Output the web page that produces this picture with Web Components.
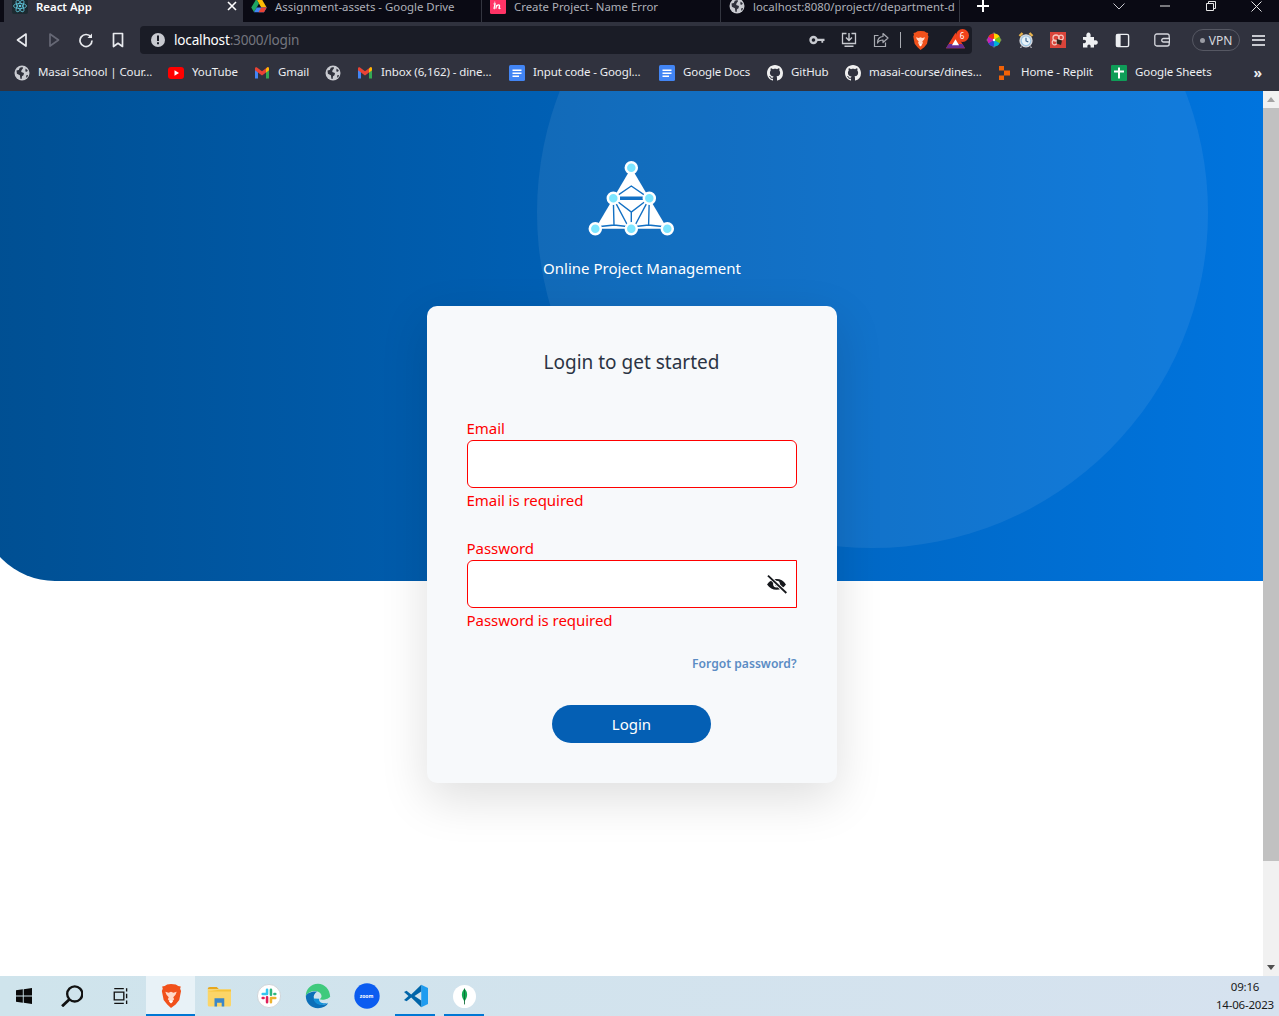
<!DOCTYPE html>
<html>
<head>
<meta charset="utf-8">
<title>React App</title>
<style>
  html, body { margin: 0; height: 100%; overflow: hidden; background: #fff; }
  body { font-family: "Noto Sans", "Open Sans", sans-serif; display: flex; flex-direction: column; width: 1279px; height: 1016px; }
</style>
</head>
<body>
  <tab-strip>
    <chrome-tab active icon="react" label="React App"></chrome-tab>
    <chrome-tab icon="drive" label="Assignment-assets - Google Drive"></chrome-tab>
    <chrome-tab icon="invision" label="Create Project- Name Error"></chrome-tab>
    <chrome-tab icon="globe" label="localhost:8080/project//department-d"></chrome-tab>
  </tab-strip>
  <tool-bar></tool-bar>
  <bookmark-bar>
    <book-mark icon="globe" label="Masai School | Cour..." width="114"></book-mark>
    <book-mark icon="youtube" label="YouTube" width="46"></book-mark>
    <book-mark icon="gmail" label="Gmail" width="31"></book-mark>
    <book-mark icon="globe"></book-mark>
    <book-mark icon="gmail" label="Inbox (6,162) - dine..." width="112"></book-mark>
    <book-mark icon="docs" label="Input code - Googl..." width="110"></book-mark>
    <book-mark icon="docs" label="Google Docs" width="68"></book-mark>
    <book-mark icon="github" label="GitHub" width="38"></book-mark>
    <book-mark icon="github" label="masai-course/dines..." width="112"></book-mark>
    <book-mark icon="replit" label="Home - Replit" width="74"></book-mark>
    <book-mark icon="sheets" label="Google Sheets" width="77"></book-mark>
  </bookmark-bar>
  <login-page>
    <login-card>
      <form-field label="Email" error="Email is required"></form-field>
      <form-field label="Password" error="Password is required" type="password" square></form-field>
    </login-card>
  </login-page>
  <task-bar></task-bar>

<script>
const GH = 'M8 0C3.58 0 0 3.58 0 8c0 3.54 2.29 6.53 5.47 7.59.4.07.55-.17.55-.38 0-.19-.01-.82-.01-1.49-2.01.37-2.53-.49-2.69-.94-.09-.23-.48-.94-.82-1.13-.28-.15-.68-.52-.01-.53.63-.01 1.08.58 1.23.82.72 1.21 1.87.87 2.33.66.07-.52.28-.87.51-1.07-1.78-.2-3.64-.89-3.64-3.95 0-.87.31-1.59.82-2.15-.08-.2-.36-1.02.08-2.12 0 0 .67-.21 2.2.82.64-.18 1.32-.27 2-.27.68 0 1.36.09 2 .27 1.53-1.04 2.2-.82 2.2-.82.44 1.1.16 1.92.08 2.12.51.56.82 1.27.82 2.15 0 3.07-1.87 3.75-3.65 3.95.29.25.54.73.54 1.48 0 1.07-.01 1.93-.01 2.2 0 .21.15.46.55.38A8.013 8.013 0 0016 8c0-4.42-3.58-8-8-8z';
const LION = '<path d="M8 0l3.2.3 1.6 1 1.7.3-.4 1.6.6 1.5-1.2 6-2.4 3L8 16l-2.5-2.3-2.4-3-1.2-6 .6-1.5-.4-1.6 1.7-.3 1.6-1z" fill="#f1511b"/><path d="M4.2 5.2l2.2.6L8 5.2l1.6.6 2.2-.6-.8 2-1.5 1.6.6 1.4L8 12.6l-2.1-2.4.6-1.4L5 7.2z" fill="#ffd9c8"/><path d="M6.6 11.6L8 10.8l1.4.8L8 13z" fill="#fff"/>';
const ICONS = {
  react: '<rect width="16" height="16" rx="2" fill="#1c2a30"/><g fill="none" stroke="#5fc7dc" stroke-width=".8"><ellipse cx="8" cy="8" rx="6.5" ry="2.6"/><ellipse cx="8" cy="8" rx="6.5" ry="2.6" transform="rotate(60 8 8)"/><ellipse cx="8" cy="8" rx="6.5" ry="2.6" transform="rotate(120 8 8)"/></g><circle cx="8" cy="8" r="1.3" fill="#5fc7dc"/>',
  drive: '<path d="M5.3 1h5.4l5 8.6H10.3z" fill="#fbbc04"/><path d="M5.3 1L.3 9.6l2.7 4.7 5-8.7z" fill="#1fa463"/><path d="M3 14.3h10l2.7-4.7H5.7z" fill="#4285f4"/><path d="M10.3 9.6h5.4l-2.7 4.7H7.6z" fill="#ea4335"/>',
  invision: '<rect width="16" height="16" rx="1.5" fill="#ff3366"/><path d="M3.6 5.8h1.5l-1 4.4c-.1.5.3.5.7.2M4.7 3.8v.6M6.7 7l-.9 3.7M6.7 8c1.5-1.6 3.2-1.5 2.8.3l-.5 1.7c-.1.7.5.8 1.4 0" fill="none" stroke="#fff" stroke-width="1.3"/>',
  globe: '<circle cx="8" cy="8" r="7.5" fill="#c9cbd1"/><path d="M2.5 5.5l2.3-.4 1-2.400L8.500 2l.5 1.300L7.500 5.300l-.3 1.800 2.800.9-.5 2.300-1.500 1-.4 2.600-1.200-.2-.5-3.500-3-1.500zM11.500 3.500l2.300 1.800-.8 1.500-1.700-.4zM12.500 10l1.700.2-1.200 2.300-1-.2z" fill="#2f313c"/>',
  youtube: '<rect y="2" width="16" height="12" rx="3" fill="#f00"/><path d="M6.5 5.3L11 8l-4.500 2.700z" fill="#fff"/>',
  gmail: '<path d="M1 13.500V4.500l3 2.200v6.800z" fill="#4285f4"/><path d="M12 13.500V6.700l3-2.200v9z" fill="#34a853"/><path d="M1 5.200V3.400c0-1 1.200-1.500 2-.9L8 6.200l5-3.700c.8-.6 2-.1 2 .9v1.800L12 7.400 8 10.400 4 7.400z" fill="#ea4335"/><path d="M12 3.900l1-1.400c.8-.6 2-.1 2 .9v1.800l-3 2.200z" fill="#fbbc04"/>',
  docs: '<rect x="0" y="0" width="16" height="16" rx="1.5" fill="#4285f4"/><path d="M3.500 4.500h9v1.600h-9zM3.500 7.500h9v1.600h-9zM3.500 10.500h6.500v1.600H3.500z" fill="#fff"/>',
  github: '<path d="' + GH + '" fill="#f0f0f0"/>',
  replit: '<path d="M2 1h5v4.500H2zM7 5.500h6v5H7zM2 10.500h5V15H2z" fill="#f26207"/>',
  sheets: '<rect width="16" height="16" rx="1" fill="#0f9d58"/><path d="M7 2.500h2v3h4v2H9v6H7v-6H3v-2h4z" fill="#fff"/>',
  lion: LION,
  triangle: '<path d="M8 1.500L16 14.500H0z" fill="#f1421c"/><path d="M0 14.500h16l-2.200-3.500H2.200z" fill="#662d91"/><path d="M8 7l3 5H5z" fill="#fff"/>',
  wheel: '<path d="M8 .3l1.500 1.500h-3zM8 15.700l1.500-1.500h-3zM.3 8l1.500-1.500v3zM15.700 8l-1.500-1.500v3z" fill="#8a8c94"/><circle cx="8" cy="8" r="6.500" fill="#777"/><path d="M8 8V1.500A6.500 6.500 0 0 1 13.600 4.700z" fill="#ffd500"/><path d="M8 8l5.600-3.300a6.500 6.500 0 0 1 0 6.500z" fill="#7ac70c"/><path d="M8 8l5.600 3.200A6.500 6.500 0 0 1 8 14.500z" fill="#00b2d6"/><path d="M8 8v6.500a6.500 6.500 0 0 1-5.600-3.300z" fill="#3445d8"/><path d="M8 8l-5.600 3.200a6.500 6.500 0 0 1 0-6.500z" fill="#c91fb8"/><path d="M8 8L2.400 4.700A6.500 6.500 0 0 1 8 1.500z" fill="#f2311a"/><circle cx="8" cy="8" r="1.200" fill="#fff"/>',
  clock: '<path d="M1.500 4L4.500 1M14.500 4L11.500 1" stroke="#e6b24c" stroke-width="2.400"/><circle cx="8" cy="8.800" r="6" fill="#9cc7e6" stroke="#d6d8de" stroke-width="1.300"/><circle cx="8" cy="8.800" r="4.200" fill="#e8f2f8"/><path d="M8 5.800v3.200l2.300 1" fill="none" stroke="#315d8a" stroke-width="1.100"/><path d="M3.500 14.500l-1 1.300M12.500 14.500l1 1.300" stroke="#c9cbd1" stroke-width="1.200"/>',
  redext: '<rect width="16" height="16" fill="#d9443a"/><circle cx="6" cy="6" r="3" fill="none" stroke="#f6c9c0" stroke-width="1.300"/><circle cx="11" cy="5.500" r="2.300" fill="none" stroke="#f6c9c0" stroke-width="1.200"/><circle cx="4.500" cy="10.500" r="2.300" fill="none" stroke="#f6c9c0" stroke-width="1.200"/><path d="M7 7l5 1.500-1 4.500-4.500-1.500z" fill="#30251f"/>',
  puzzle: '<path d="M1 5h3.500c-.8-3 .7-4.500 2-4.500S9.300 2 8.500 5H12v3.500c3-.8 3.800.8 3.800 2s-.9 2.800-3.800 2V15.500H8.500c.7-2.300-.6-3-1.500-3s-2.200.7-1.500 3H1V11c2.300.7 3-.6 3-1.500S3.300 7.300 1 8z" fill="#eef0f2"/>',
  sidebar: '<rect x="1.500" y="1.500" width="13" height="13" rx="1.500" fill="none" stroke="#eceef1" stroke-width="1.500"/><rect x="1.500" y="1.500" width="4.500" height="13" fill="#eceef1"/>',
  wallet: '<rect x=".8" y="2" width="14.400" height="12" rx="2" fill="none" stroke="#d6d8de" stroke-width="1.300"/><path d="M9.500 6.500h6v3.500h-6a1.700 1.700 0 0 1 0-3.500z" fill="#30323e" stroke="#d6d8de" stroke-width="1.300"/>',
  back: '<path d="M12 2L3.500 8 12 14z" fill="none" stroke="#e8eaee" stroke-width="1.700" stroke-linejoin="round"/>',
  forward: '<path d="M4 2l8.500 6L4 14z" fill="none" stroke="#666875" stroke-width="1.700" stroke-linejoin="round"/>',
  reload: '<path d="M13 5.200A6 6 0 1 0 14 8.500" fill="none" stroke="#e8eaee" stroke-width="1.700"/><path d="M14 1.500V6H9.500z" fill="#e8eaee"/>',
  bookmark: '<path d="M3.500 1.500h9v13L8 11.300l-4.500 3.200z" fill="none" stroke="#e8eaee" stroke-width="1.700" stroke-linejoin="round"/>',
  info: '<circle cx="8" cy="8" r="7" fill="#c7c9cf"/><path d="M7 3.500h2v5.500H7zM7 10.300h2v2H7z" fill="#1a1c26"/>',
  key: '<circle cx="4.500" cy="8" r="3" fill="none" stroke="#c7c9cf" stroke-width="2.400"/><path d="M7.500 6.800H15.500v2.200h-1.300v1.800h-1.800V9H7.500z" fill="#c7c9cf"/>',
  install: '<path d="M5.500 1.500H1.500v10h13v-10h-4" fill="none" stroke="#c7c9cf" stroke-width="1.300"/><path d="M8 1v7M5 5.500l3 3 3-3" fill="none" stroke="#c7c9cf" stroke-width="1.400"/><path d="M3.500 13.500h9v1.500h-9z" fill="#c7c9cf"/>',
  share: '<path d="M5.500 3.500H1.500v11h11v-4" fill="none" stroke="#a9abb2" stroke-width="1.200"/><path d="M10 1.500L15 6l-5 4.500V8C7 8 5.500 9 4.500 11c0-4 2-6.500 5.500-6.500z" fill="none" stroke="#a9abb2" stroke-width="1.200" stroke-linejoin="round"/>',
  windows: '<path d="M0 2.300l6.800-1v6.300H0zM7.700 1.200L16 0v7.600H7.700zM0 8.400h6.800v6.400l-6.800-1zM7.700 8.400H16V16l-8.300-1.200z" fill="#0a0a0a"/>',
  search: '<circle cx="10" cy="6.500" r="5.500" fill="none" stroke="#111" stroke-width="1.700"/><path d="M6 10.500L.8 15.500" stroke="#111" stroke-width="2"/>',
  taskview: '<path d="M2 4.500h8.500v7H2zM2 1.500h8.500M2 14.500h8.500M13 1v3M13 6v4M13 12v3" fill="none" stroke="#111" stroke-width="1.200"/>',
  folder: '<path d="M.5 3.500C.5 2.500 1 2 2 2h4.500l1.500 1.500z" fill="#e8a71c"/><path d="M.5 3.500H16v10.500c0 .6-.4 1-1 1H1.500c-.6 0-1-.4-1-1z" fill="#fbd568"/><path d="M.5 5H16V3.800H8z" fill="#f5c33b"/><path d="M5 9.500h6.500V15H9.800v-2.500H6.700V15H5z" fill="#3b87c9"/>',
  slack: '<circle cx="8" cy="8" r="7.700" fill="#fff" stroke="#c8ccd0" stroke-width=".5"/><g stroke-width="1.700" stroke-linecap="round"><path d="M6.700 3.800v2.900M3.800 6.700h2.900" stroke="#36c5f0"/><path d="M9.300 3.800v3.400M12.200 6.700h-.6" stroke="#2eb67d"/><path d="M9.300 12.200V9.300M12.200 9.300H9.300" stroke="#ecb22e"/><path d="M6.700 12.200V8.800M3.800 9.300h.6" stroke="#e01e5a"/></g>',
  edge: '<path d="M15.500 8.800C15.500 4 12 .5 8 .5 3.500.5.5 4 .5 8c2-3.500 8-4.200 9.500-.8.5 1.300-.2 2.300-1 2.800 2 .7 6.500-.2 6.500-2.200z" fill="#3fca7d"/><path d="M.5 8c0 4.500 3.300 7.500 7.500 7.500 3 0 5.200-1.300 6.200-3-3 1.500-7.500 1-8.700-2.800C5 8 5.800 6.300 7.500 5.300 4.500 5 1.500 6 .5 8z" fill="#0c6fb8"/><path d="M5.200 9.500c.5 3 3.500 4.500 6.500 3.800 1-.2 2-.6 2.500-1.100-2.700.9-6-.1-5.500-2.500z" fill="#1390d8"/>',
  zoom: '<circle cx="8" cy="8" r="7.800" fill="#0b5cf0"/>',
  vscode: '<path d="M11.500.5L16 2.600v10.800l-4.500 2.100z" fill="#1f9cf0"/><path d="M11.500.5L4.800 7 1.700 4.500 0 5.400 3 8l-3 2.600 1.700.9 3.100-2.500 6.700 6.500V11L7 8l4.500-3z" fill="#0065a9"/>',
  mongo: '<circle cx="8" cy="8" r="8" fill="#fff"/><path d="M8 2.500c2.300 2.500 2.600 5.500 0 9-2.600-3.500-2.300-6.500 0-9z" fill="#13aa52"/><path d="M8 2.500v11" stroke="#0d6a35" stroke-width=".6"/>',
  eyeoff: '<path d="M.8 8c3.500-5.300 10.900-5.800 14.400 0-3.500 5.300-10.900 5.300-14.400 0z" fill="#16181c"/><circle cx="8" cy="7.700" r="2.600" fill="#fff"/><circle cx="8.300" cy="8" r="1.300" fill="#16181c"/><path d="M2 1.500L15 14" stroke="#fff" stroke-width="2.800"/><path d="M1.500 1.300L15.500 14.500" stroke="#16181c" stroke-width="1.400"/>'
};

class UiIcon extends HTMLElement {
  connectedCallback() {
    const size = this.getAttribute('size') || 16;
    const name = this.getAttribute('name');
    this.attachShadow({ mode: 'open' }).innerHTML = `
      <style>:host{display:inline-flex;width:${size}px;height:${size}px;flex:none} svg{display:block;width:100%;height:100%}</style>
      <svg viewBox="0 0 16 16">${ICONS[name] || ''}</svg>`;
  }
}

class ChromeTab extends HTMLElement {
  connectedCallback() {
    const active = this.hasAttribute('active');
    this.attachShadow({ mode: 'open' }).innerHTML = `
      <style>
        :host{display:flex;align-items:center;gap:8px;width:239px;height:22px;box-sizing:border-box;padding:0 5px 8px 8px;flex:none;overflow:hidden;
          font-size:11.4px;white-space:nowrap;color:${active ? '#fff' : '#aeb0b8'};font-weight:${active ? 600 : 400};
          background:${active ? '#30323e' : 'transparent'};border-right:1px solid ${active ? 'transparent' : '#33353f'}}
        .t{flex:1;line-height:14px}
        ui-icon{margin-top:-2px}
        svg{margin-top:-2px}
      </style>
      <ui-icon name="${this.getAttribute('icon')}"></ui-icon>
      <span class="t">${this.getAttribute('label')}</span>
      ${active ? '<svg width="10" height="10" viewBox="0 0 10 10"><path d="M1 1l8 8M9 1L1 9" stroke="#fff" stroke-width="1.600"/></svg>' : ''}`;
  }
}

class TabStrip extends HTMLElement {
  constructor() {
    super();
    this.attachShadow({ mode: 'open' }).innerHTML = `
      <style>
        :host{display:flex;height:22px;background:#0a0a14;padding-left:4px;overflow:hidden;flex:none}
        .b{width:46px;height:12px;display:flex;align-items:center;justify-content:center;flex:none}
        .s{flex:1}
      </style>
      <slot></slot>
      <div class="b"><svg width="12" height="12" viewBox="0 0 12 12"><path d="M6 0v12M0 6h12" stroke="#fff" stroke-width="2"/></svg></div>
      <div class="s"></div>
      <div class="b"><svg width="12" height="7" viewBox="0 0 12 7"><path d="M.5.5L6 6l5.500-5.500" fill="none" stroke="#c8c9cf"/></svg></div>
      <div class="b"><svg width="10" height="2" viewBox="0 0 10 2"><path d="M0 1h10" stroke="#e6e6e6"/></svg></div>
      <div class="b"><svg width="10" height="10" viewBox="0 0 10 10"><path d="M.5 2.500h7v7h-7zM2.500 2.500v-2h7v7h-2" fill="none" stroke="#e6e6e6"/></svg></div>
      <div class="b" style="width:45px"><svg width="11" height="11" viewBox="0 0 11 11"><path d="M.5.5l10 10M10.500.5l-10 10" stroke="#e6e6e6"/></svg></div>`;
  }
}

class ToolBar extends HTMLElement {
  constructor() {
    super();
    const btn = (n, s) => `<span class="b"><ui-icon name="${n}" size="${s || 16}"></ui-icon></span>`;
    this.attachShadow({ mode: 'open' }).innerHTML = `
      <style>
        :host{display:flex;align-items:center;height:32px;background:#30323e;padding:4px 0 0 6px;flex:none;box-sizing:border-box}
        .b{width:32px;height:28px;display:flex;align-items:center;justify-content:center;flex:none;position:relative}
        .addr{width:832px;height:28px;margin:0 6px;background:#1a1c26;border-radius:4px;display:flex;align-items:center;padding:0 1px 0 10px;box-sizing:border-box}
        .url{margin:-2px 0 0 8px;font-size:13.6px;color:#fff;letter-spacing:-.2px;flex:1}
        .url span{color:#74767f}
        .sep{width:1px;height:16px;background:#a9abb2;margin:0 3px}
        .badge{position:absolute;left:16.500px;top:3px;width:13px;height:13px;border-radius:50%;background:#f1421c;color:#fff;font-size:8px;line-height:13px;text-align:center}
        .vpn{width:48px;height:22px;margin-left:14px;box-sizing:border-box;border:1px solid #565863;border-radius:11px;display:flex;align-items:center;justify-content:center;gap:4px;color:#d6d8de;font-size:12px}
        .vpn i{width:5px;height:5px;border-radius:50%;background:#9a9ca4}
        .menu{width:13px;height:11px;border-top:2px solid #c7c9cf;border-bottom:2px solid #c7c9cf;position:relative;box-sizing:border-box}
        .menu::after{content:"";position:absolute;left:0;right:0;top:2.500px;height:2px;background:#c7c9cf}
      </style>
      ${btn('back')}${btn('forward')}${btn('reload')}${btn('bookmark')}
      <div class="addr">
        <ui-icon name="info" size="16"></ui-icon>
        <div class="url">localhost<span>:3000/login</span></div>
        ${btn('key')}${btn('install')}${btn('share')}
        <div class="sep"></div>
        ${btn('lion', 19)}
        <span class="b" style="margin-left:3px"><ui-icon name="triangle" size="19"></ui-icon><span class="badge">6</span></span>
      </div>
      ${btn('wheel')}${btn('clock')}${btn('redext')}${btn('puzzle')}${btn('sidebar', 15)}
      <span style="width:8px"></span>${btn('wallet')}
      <div class="vpn"><i></i>VPN</div>
      <span class="b" style="margin-left:2px"><span class="menu"></span></span>`;
  }
}

class BookMark extends HTMLElement {
  connectedCallback() {
    const label = this.getAttribute('label');
    this.attachShadow({ mode: 'open' }).innerHTML = `
      <style>
        :host{display:flex;align-items:center;gap:8px;flex:none;font-size:11.5px;color:#eceef1;white-space:nowrap;letter-spacing:-.1px}
        span{display:block;width:${this.getAttribute('width')}px;line-height:16px;margin-top:-1px}
      </style>
      <ui-icon name="${this.getAttribute('icon')}"></ui-icon>
      ${label ? `<span>${label}</span>` : ''}`;
  }
}

class BookmarkBar extends HTMLElement {
  constructor() {
    super();
    this.attachShadow({ mode: 'open' }).innerHTML = `
      <style>
        :host{display:flex;align-items:center;gap:16px;height:37px;box-sizing:border-box;padding-left:14px;background:#30323e;flex:none;position:relative}
        .more{margin-left:auto;margin-right:17px;color:#eceef1;font-size:14px;line-height:14px;font-weight:700}
      </style>
      <slot></slot>
      <span class="more">»</span>`;
  }
}

class LoginPage extends HTMLElement {
  constructor() {
    super();
    this.attachShadow({ mode: 'open' }).innerHTML = `
      <style>
        :host{display:flex;height:885px;flex:none;overflow:hidden;background:#fff}
        main{flex:1;position:relative;display:flex;flex-direction:column;align-items:center;padding-top:66px;box-sizing:border-box;overflow:hidden;min-width:0}
        .hero{position:absolute;left:-20px;right:0;top:0;height:490px;border-bottom-left-radius:75px;overflow:hidden;
          background:linear-gradient(90deg,#004f92 0%,#0074de 100%)}
        .hero::before{content:"";position:absolute;left:557px;top:-214px;width:671px;height:671px;border-radius:50%;background:rgba(255,255,255,.07)}
        .logo{position:relative;display:block}
        h1{position:relative;margin:15px 0 26px 21px;font-size:15px;line-height:24px;font-weight:400;color:#fff}
        .bar{width:16px;background:#f1f1f1;position:relative;flex:none;display:flex;flex-direction:column;align-items:center}
        .thumb{width:16px;height:753px;margin-top:6px;background:#c1c1c1}
        .a{width:0;height:0;border-left:4px solid transparent;border-right:4px solid transparent}
        .up{border-bottom:5px solid #a3a3a3;margin-top:6px}
        .down{border-top:5px solid #505050;margin-top:auto;margin-bottom:6px}
      </style>
      <main>
        <div class="hero"></div>
        <svg class="logo" width="94" height="84" viewBox="0 0 94 84">
          <path d="M46.3 10.7L10.3 71.7H82.300z" fill="#fff"/>
          <g fill="none" stroke="#1270c4" stroke-width="1.400">
            <path d="M28.300 41.300L46.300 29L64.300 41.300"/>
            <path d="M28.300 41.300L46.300 55L64.300 41.300M46.300 55V71.700"/>
            <path d="M28.300 41.300L44 71M64.300 41.300L48.600 71"/>
            <path d="M28.300 41.300L29 68L10.300 70M29 68L46.300 70M64.300 41.300L63.600 68L82.300 70M63.600 68L46.300 70"/>
          </g>
          <rect x="35" y="39.500" width="23" height="3.500" fill="#1270c4"/>
          <g fill="#7de6ff" stroke="#fff" stroke-width="2.500">
            <circle cx="46.300" cy="10.700" r="5.500"/><circle cx="28.300" cy="41.300" r="5.500"/><circle cx="64.300" cy="41.300" r="5.500"/>
            <circle cx="10.300" cy="71.700" r="5.500"/><circle cx="46.300" cy="71.700" r="5.500"/><circle cx="82.300" cy="71.700" r="5.500"/>
          </g>
        </svg>
        <h1>Online Project Management</h1>
        <slot></slot>
      </main>
      <div class="bar"><i class="a up"></i><div class="thumb"></div><i class="a down"></i></div>`;
  }
}

class LoginCard extends HTMLElement {
  constructor() {
    super();
    this.attachShadow({ mode: 'open' }).innerHTML = `
      <style>
        :host{display:block;position:relative;width:410px;height:477px;box-sizing:border-box;padding:41px 40px 40px;flex:none;
          background:#f7f9fb;border-radius:10px;box-shadow:0 16px 48px rgba(0,0,0,.13)}
        h2{margin:0 0 39px;text-align:center;font-size:19px;line-height:30px;font-weight:400;color:#2b3444}
        .fields{display:flex;flex-direction:column;gap:24px}
        a{display:block;margin-top:21px;text-align:right;font-size:12.100px;line-height:22px;font-weight:600;color:#5b8cc4;text-decoration:none}
        button{display:block;margin:30px auto 0;width:159px;height:38px;border:0;border-radius:19px;background:#045fb4;color:#fff;font:inherit;font-size:15px}
      </style>
      <h2>Login to get started</h2>
      <div class="fields"><slot></slot></div>
      <a href="#">Forgot password?</a>
      <button type="button">Login</button>`;
  }
}

class FormField extends HTMLElement {
  connectedCallback() {
    const pw = this.getAttribute('type') === 'password';
    this.attachShadow({ mode: 'open' }).innerHTML = `
      <style>
        :host{display:block;color:#f00;font-size:15px;line-height:24px;letter-spacing:-.05px}
        .box{position:relative;height:48px}
        input{display:block;width:100%;height:48px;box-sizing:border-box;border:1px solid #f00;border-radius:${this.hasAttribute('square') ? '6px 0 0 6px' : '6px'};background:#fff;outline:0;padding:0 40px 0 12px;font:inherit}
        ui-icon{position:absolute;right:10px;top:14px}
      </style>
      <div>${this.getAttribute('label')}</div>
      <div class="box"><input type="${pw ? 'password' : 'text'}">${pw ? '<ui-icon name="eyeoff" size="21"></ui-icon>' : ''}</div>
      <div>${this.getAttribute('error')}</div>`;
  }
}

class TaskBar extends HTMLElement {
  constructor() {
    super();
    const it = (n, s, cls) => `<span class="i ${cls || ''}"><ui-icon name="${n}" size="${s}"></ui-icon></span>`;
    this.attachShadow({ mode: 'open' }).innerHTML = `
      <style>
        :host{display:flex;height:40px;flex:none;background:linear-gradient(90deg,#cfe4ec,#d6e2ef);align-items:stretch;padding-left:0}
        .i{width:49px;margin-left:0;display:flex;align-items:center;justify-content:center;box-sizing:border-box;position:relative;flex:none;left:-1px}
        .nudge{left:-2px}
        .active{background:#e8f2f7}
        .run::after{content:"";position:absolute;left:4px;right:5px;bottom:0;height:2px;background:#0078d4}
        .active::after{left:0;right:0}
        .zl{position:absolute;font-size:5px;color:#fff;font-weight:700}
        .clock{margin-left:auto;padding:0 5px 0 0;font-size:11.500px;line-height:18px;text-align:center;align-self:center;color:#1a1a1a;letter-spacing:-.2px}
      </style>
      ${it('windows', 16)}${it('search', 22, 'nudge')}${it('taskview', 18, 'nudge')}
      ${it('lion', 24, 'active run')}${it('folder', 24, 'nudge')}${it('slack', 24)}${it('edge', 26)}
      <span class="i"><ui-icon name="zoom" size="26"></ui-icon><span class="zl">zoom</span></span>
      ${it('vscode', 24, 'run')}${it('mongo', 23, 'run')}
      <div class="clock">09:16<br>14-06-2023</div>`;
  }
}

customElements.define('ui-icon', UiIcon);
customElements.define('chrome-tab', ChromeTab);
customElements.define('tab-strip', TabStrip);
customElements.define('tool-bar', ToolBar);
customElements.define('book-mark', BookMark);
customElements.define('bookmark-bar', BookmarkBar);
customElements.define('login-page', LoginPage);
customElements.define('login-card', LoginCard);
customElements.define('form-field', FormField);
customElements.define('task-bar', TaskBar);
</script>
</body>
</html>
